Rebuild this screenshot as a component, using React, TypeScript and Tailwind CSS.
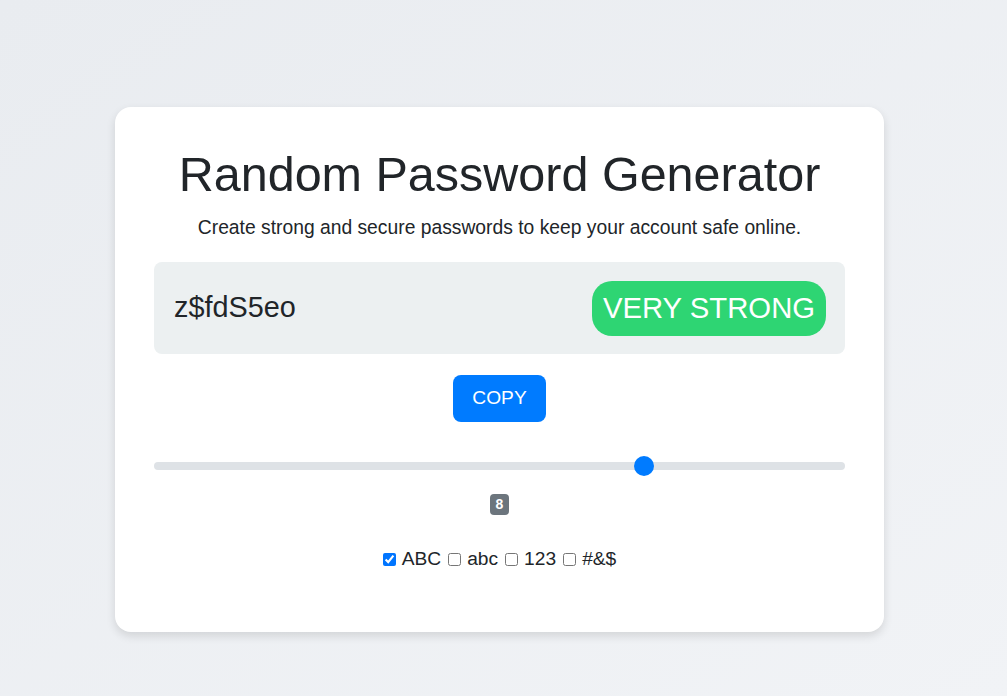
import { useState } from "react";

const Slider = ({ value, min, max }: { value: number; min: number; max: number }) => {
    const pct = (value - min) / (max - min);
    return (
        <div className="relative h-[20px] flex items-center">
            <div className="w-full h-[8px] rounded-full bg-[#dee2e6]"></div>
            <div
                className="absolute top-0 w-[20px] h-[20px] rounded-full bg-[#007bff]"
                style={{ left: `calc(${pct * 100}% - ${pct * 20}px)` }}
            ></div>
        </div>
    );
};

const Option = ({ label, checked }: { label: string; checked?: boolean }) => {
    const [on, setOn] = useState(!!checked);
    return (
        <label className="flex items-center gap-[6px]">
            <input
                type="checkbox"
                checked={on}
                onChange={() => setOn(!on)}
                className="w-[13px] h-[13px] m-0"
            />
            <span>{label}</span>
        </label>
    );
};

export default function App() {
    return (
        <div className="min-h-[696px] w-full bg-gradient-to-br from-[#e9ecf0] to-[#f1f3f6] flex justify-center pt-[107px] pr-[8px] font-['Liberation_Sans',Arial,sans-serif] text-[#212529]">
            <div className="w-[769px] h-[525px] bg-white rounded-[16px] shadow-[0_4px_10px_rgba(0,0,0,0.12)] px-[39px] pt-[27px] flex flex-col">
                <h1 className="text-[48.5px] leading-[80px] text-center">Random Password Generator</h1>
                <p className="text-[19.3px] leading-[22px] text-center mt-[3px]">
                    Create strong and secure passwords to keep your account safe online.
                </p>
                <div className="mt-[23px] h-[92px] rounded-[8px] bg-[#ecf0f1] flex items-center justify-between pl-[20px] pr-[19px]">
                    <span className="text-[28.8px]">z$fdS5eo</span>
                    <span className="h-[55px] w-[234px] rounded-[20px] bg-[#2ed573] text-white text-[29.3px] flex items-center justify-center">
                        VERY STRONG
                    </span>
                </div>
                <div className="flex justify-center mt-[21px]">
                    <button className="w-[93px] h-[47px] rounded-[8px] bg-[#007bff] text-white text-[19.2px]">COPY</button>
                </div>
                <div className="mt-[34px]">
                    <Slider value={8} min={1} max={10.79} />
                </div>
                <div className="flex justify-center mt-[18px]">
                    <span className="w-[19px] h-[21px] rounded-[4px] bg-[#6c757d] text-white text-[14px] font-bold flex items-center justify-center">
                        8
                    </span>
                </div>
                <div className="flex justify-center gap-[7px] mt-[30px] text-[19.2px]">
                    <Option label="ABC" checked />
                    <Option label="abc" />
                    <Option label="123" />
                    <Option label="#&$" />
                </div>
            </div>
        </div>
    );
}
